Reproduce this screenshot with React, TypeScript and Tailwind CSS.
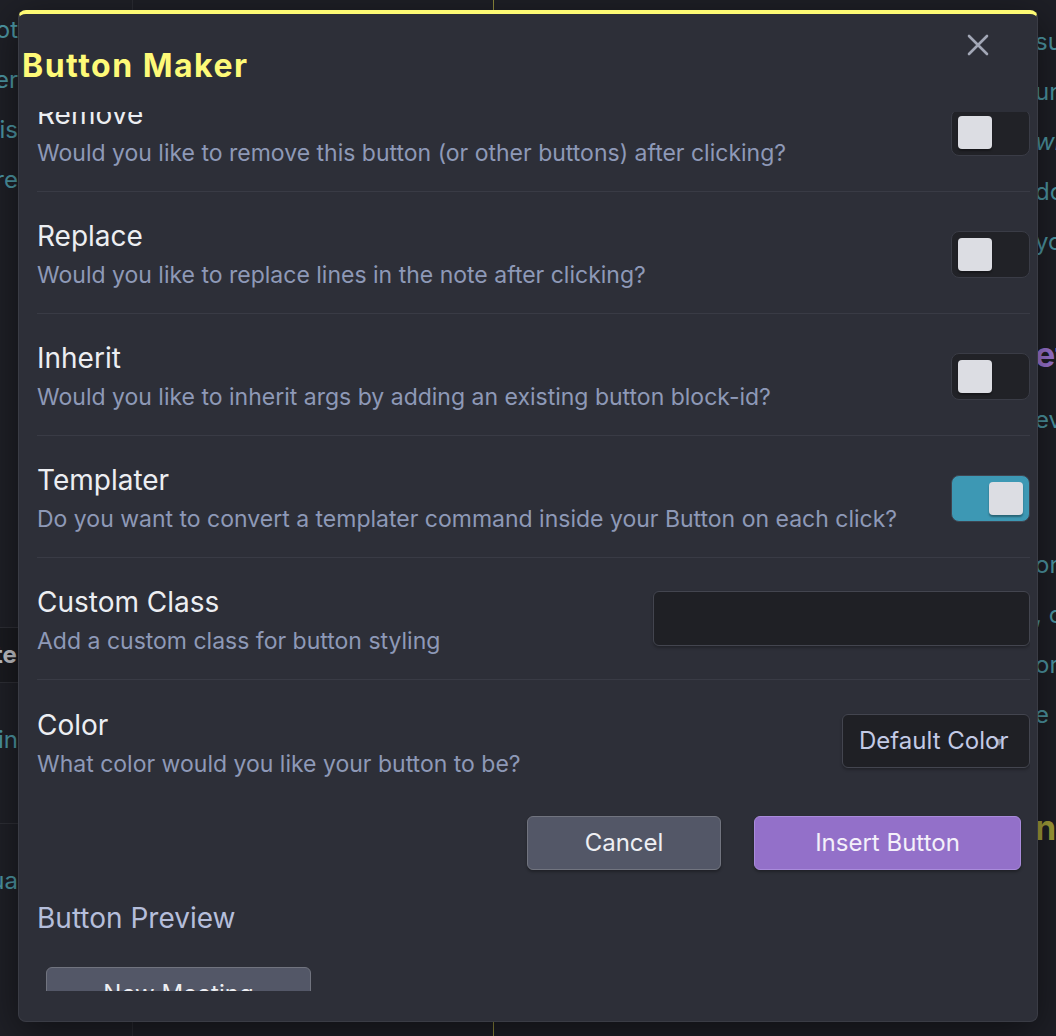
import React from "react";

type Setting = { name: string; desc: string; on: boolean };

const settings: Setting[] = [
  { name: "Remove", desc: "Would you like to remove this button (or other buttons) after clicking?", on: false },
  { name: "Replace", desc: "Would you like to replace lines in the note after clicking?", on: false },
  { name: "Inherit", desc: "Would you like to inherit args by adding an existing button block-id?", on: false },
  { name: "Templater", desc: "Do you want to convert a templater command inside your Button on each click?", on: true },
];

const Toggle = ({ on }: { on: boolean }) => (
  <div
    className={`mt-[4px] flex h-[47px] w-[79px] shrink-0 items-center rounded-[8px] border px-[6px] ${
      on ? "justify-end border-[#3f4450] bg-[#3d98b4]" : "justify-start border-[#3a3c46] bg-[#212227]"
    }`}
  >
    <span className="h-[33px] w-[34px] rounded-[4px] bg-[#dcdde3] shadow-[0_2px_2px_rgba(0,0,0,0.35)]" />
  </div>
);

const SettingText = ({ name, desc }: { name: string; desc: string }) => (
  <div className="mt-[6px] flex flex-col gap-[3px]">
    <div className="text-[28px] leading-[36px] text-[#eceef2]">{name}</div>
    <div className="text-[23px] leading-[36px] text-[#8e99b7]">{desc}</div>
  </div>
);

const Background = () => (
  <div className="flex h-[1036px] w-[1056px] bg-[#1e1f26] text-[24px] leading-[50px] text-[#4d97a4]">
    <div className="flex w-[133px] shrink-0 flex-col border-r border-[#2b2c33] bg-[#1f2027]">
      <div className="flex w-[18px] flex-col overflow-hidden whitespace-nowrap pt-[5px]">
        <div className="flex justify-end">spot</div>
        <div className="flex justify-end">ner</div>
        <div className="flex justify-end">is</div>
        <div className="flex justify-end">re </div>
      </div>
      <div className="mt-[422px] flex h-[56px] items-center overflow-hidden whitespace-nowrap border-y border-[#2e2f36] bg-[#1a1b20] font-bold text-[#c4c5ca]">
        <span className="-ml-[6px]">te</span>
      </div>
      <div className="flex w-[18px] justify-end overflow-hidden whitespace-nowrap pt-[32px]">in</div>
      <div className="mt-[58px] border-t border-[#2e2f36]" />
      <div className="flex w-[18px] justify-end overflow-hidden whitespace-nowrap pt-[32px]">qua</div>
    </div>
    <div className="w-[361px] shrink-0 border-r border-[#8f8a3c]" />
    <div className="flex flex-col whitespace-nowrap pl-[541px] pt-[17px]">
      <div>sure</div>
      <div>unt</div>
      <div className="italic">with</div>
      <div>do</div>
      <div>you</div>
      <div className="mt-[63px] text-[34px] font-bold text-[#9d76d4]">eta</div>
      <div className="mt-[15px]">eve</div>
      <div className="mt-[95px]">on</div>
      <div>, co</div>
      <div>or</div>
      <div>e</div>
      <div className="mt-[63px] text-[34px] font-bold text-[#a3a03a]">n</div>
    </div>
  </div>
);

export default function App() {
  return (
    <div className="relative h-[1036px] w-[1056px] overflow-hidden font-['Inter',sans-serif]">
      <Background />
      <div className="absolute left-[18px] top-[10px] flex h-[1012px] w-[1020px] flex-col rounded-[8px] border border-t-4 border-[#3a3c45] border-t-[#fdfa74] bg-[#2d2f38] shadow-[0_10px_40px_rgba(0,0,0,0.5)]">
        <button className="absolute right-[39px] top-[11px] flex h-[40px] w-[40px] items-center justify-center text-[#a2a7b6]">
          <svg width="22" height="22" viewBox="0 0 22 22" fill="none" stroke="currentColor" strokeWidth="2.6" strokeLinecap="round">
            <path d="M2 2 L20 20 M20 2 L2 20" />
          </svg>
        </button>
        <div className="pl-[3px] pt-[32px] text-[32px] font-bold leading-[40px] tracking-[1.5px] text-[#fefa78]">Button Maker</div>

        <div className="ml-[18px] mt-[26px] h-[879px] w-[993px] overflow-hidden">
          <div className="-mt-[42px] flex flex-col">
            {settings.map((s) => (
              <div key={s.name} className="flex h-[122px] items-center justify-between border-b border-[#393b45]">
                <SettingText name={s.name} desc={s.desc} />
                <Toggle on={s.on} />
              </div>
            ))}
            <div className="flex h-[122px] items-center justify-between border-b border-[#393b45]">
              <SettingText name="Custom Class" desc="Add a custom class for button styling" />
              <div className="h-[55px] w-[377px] rounded-[6px] border border-[#43454f] bg-[#1f2025] shadow-[0_2px_3px_rgba(0,0,0,0.25)]" />
            </div>
            <div className="flex h-[122px] items-center justify-between">
              <SettingText name="Color" desc="What color would you like your button to be?" />
              <div className="relative flex h-[54px] w-[188px] items-center rounded-[6px] border border-[#43454f] bg-[#1f2025] pl-[16px] text-[24px] text-[#c3cae6] shadow-[0_2px_3px_rgba(0,0,0,0.25)]">
                <span className="relative z-10">Default Color</span>
                <svg className="absolute right-[24px] top-[22px]" width="12" height="10" viewBox="0 0 12 10" fill="#7a7d88">
                  <path d="M1 2 L11 2 L6 9 Z" />
                </svg>
              </div>
            </div>

            <div className="mt-[14px] flex justify-end gap-[33px] pr-[9px]">
              <button className="h-[54px] w-[194px] rounded-[6px] border border-[#71747f] bg-[#535767] text-[24px] text-[#eeeff3] shadow-[0_2px_3px_rgba(0,0,0,0.3)]">
                Cancel
              </button>
              <button className="h-[54px] w-[267px] rounded-[6px] border border-[#a98bdb] bg-[#9370c9] text-[24px] text-[#f4f0fa] shadow-[0_2px_3px_rgba(0,0,0,0.3)]">
                Insert Button
              </button>
            </div>

            <div className="mt-[30px] text-[28px] leading-[36px] text-[#b5bedb]">Button Preview</div>
            <button className="ml-[9px] mt-[31px] h-[54px] w-[265px] rounded-[6px] border border-[#71747f] bg-[#535767] text-[24px] text-[#eeeff3]">
              New Meeting
            </button>
          </div>
        </div>
      </div>
    </div>
  );
}
